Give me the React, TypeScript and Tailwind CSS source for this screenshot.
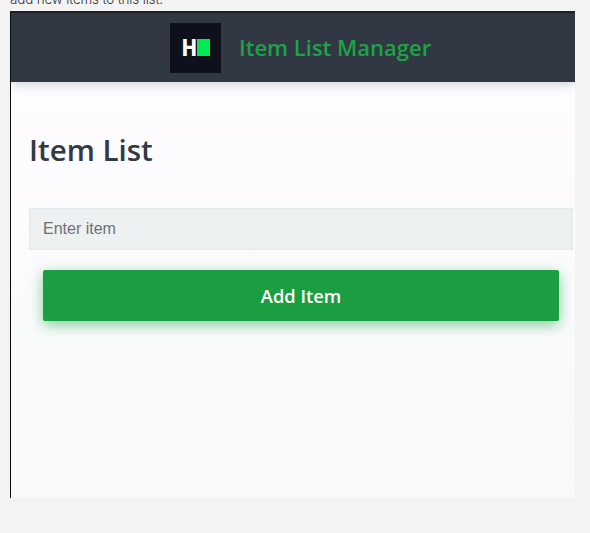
export default function App() {
  return (
    <div className="h-[533px] w-[590px] overflow-hidden bg-[#f3f3f3] font-['Open_Sans',sans-serif]">
      <p className="h-[11px] overflow-hidden pl-[10px] font-['Inter',sans-serif] text-[13.4px] leading-[18px] font-light tracking-[-0.14px] text-[#333]">
        <span className="-mt-[10px] block">add new items to this list.</span>
      </p>
      <div className="ml-[10px] h-[487px] w-[565px] overflow-hidden border-t-2 border-l border-t-[#1e1f25] border-l-[#0c0d10] bg-linear-to-b from-[#fffcff] to-[#f7f9fb]">
        <header className="flex h-[69px] items-center bg-[#323843] pl-[159px] shadow-[0_2px_10px_#c6d0d3]">
          <div className="flex h-[50px] w-[51px] items-center bg-[#0e111b] pl-[12px]">
            <span className="block w-[15px] origin-left scale-x-[0.87] font-['Roboto',sans-serif] text-[24px] leading-[50px] font-black text-white">
              <span className="block">H</span>
            </span>
            <span className="h-[17px] w-[13px] bg-[#00ea55]" />
          </div>
          <span className="ml-[18px] text-[22px] font-semibold text-[#1ba345]">Item List Manager</span>
        </header>
        <main className="pl-[18px]">
          <h1 className="pt-[48px] text-[29.5px] leading-[40px] font-semibold text-[#323844]">Item List</h1>
          <div className="mt-[38px] flex h-[42px] w-[544px] items-center bg-[#edf1f2] pl-[14px] font-['Liberation_Sans',sans-serif] text-base text-[#6f7072] shadow-[inset_0_0_3px_#d5dcdf]">Enter item</div>
          <button className="mt-[20px] ml-[14px] block h-[51px] w-[516px] rounded-[2px] bg-[#1b9e41] text-[18.3px] font-semibold text-white shadow-[0_4px_14px_#84cd99]">Add Item</button>
        </main>
      </div>
    </div>
  );
}
